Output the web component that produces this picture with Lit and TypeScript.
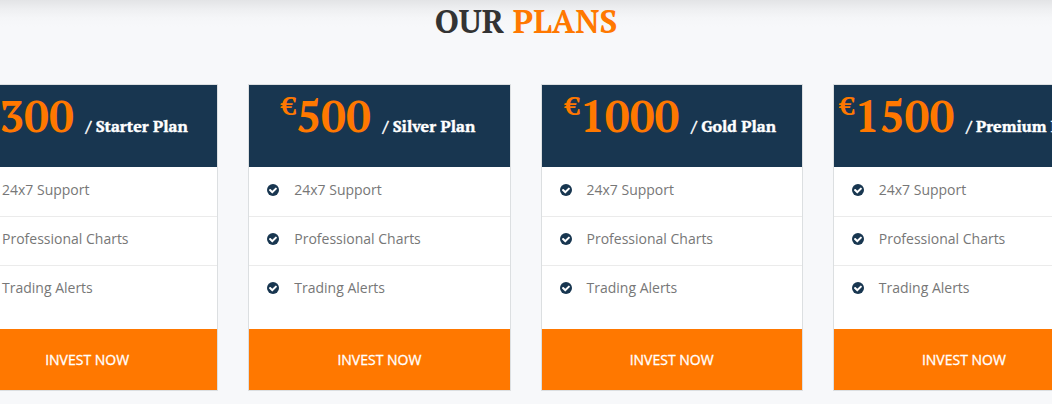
import { LitElement, html, css } from "lit";
import { customElement, property } from "lit/decorators.js";

@customElement("plan-card")
class PlanCard extends LitElement {
  @property() amount = "";
  @property() name = "";
  @property({ attribute: false }) features: string[] = [];

  static styles = css`
    :host {
      display: block;
      min-width: 0;
      border: 1px solid #dcdfe1;
      background: #fff;
    }
    .head {
      display: flex;
      justify-content: center;
      align-items: baseline;
      height: 82px;
      margin: 0;
      background: #183650;
      color: #ff7800;
      font: bold 44px/62px "PT Serif", "Liberation Serif", serif;
      white-space: nowrap;
    }
    .currency {
      align-self: flex-start;
      font-size: 26px;
      line-height: 40px;
    }
    .name {
      margin: 0 2px 0 12px;
      color: #fff;
      font-size: 16px;
      -webkit-text-stroke: 0.4px #fff;
    }
    .features {
      margin: 0;
      padding: 1px 0 15px;
      list-style: none;
    }
    .feature {
      display: flex;
      align-items: center;
      gap: 15px;
      padding: 11px 18px 15px;
      border-bottom: 1px solid #ebebeb;
      color: #777;
      font-size: 14px;
      line-height: 22px;
    }
    .feature:last-child {
      border-bottom: 0;
    }
    .check {
      flex: none;
      width: 12px;
      height: 12px;
    }
    .invest {
      display: block;
      background: #ff7800;
      color: #fff;
      font-size: 14px;
      line-height: 61px;
      text-align: center;
      text-decoration: none;
      -webkit-text-stroke: 0.3px #fff;
    }
  `;

  render() {
    return html`
      <h3 class="head">
        <span class="currency">€</span><span>${this.amount}</span>
        <span class="name">/ ${this.name}</span>
      </h3>
      <ul class="features">
        ${this.features.map(
          (feature) => html`
            <li class="feature">
              <svg class="check" viewBox="0 0 1536 1536" aria-hidden="true">
                <circle cx="768" cy="768" r="768" fill="#183650" />
                <path
                  fill="#fff"
                  d="M1284 606q0-28-18-46l-91-90q-19-19-45-19t-45 19L677 877 451 651q-19-19-45-19t-45 19l-91 90q-18 18-18 46 0 27 18 45l362 362q19 19 45 19 27 0 46-19l543-543q18-18 18-45z"
                />
              </svg>
              <span>${feature}</span>
            </li>
          `
        )}
      </ul>
      <a class="invest" href="#">INVEST NOW</a>
    `;
  }
}

@customElement("app-root")
class AppRoot extends LitElement {
  static styles = css`
    :host {
      display: block;
      min-height: 100vh;
      box-sizing: border-box;
      overflow: hidden;
      background: linear-gradient(#e3e4e6, #eeeff1 9px, #f5f6f8 18px, #f7f8fa 27px);
      font-family: "Open Sans", sans-serif;
    }
    .title {
      margin: 0;
      padding: 0 0 42px;
      color: #333;
      font: bold 32px/42px "PT Serif", "Liberation Serif", serif;
      text-align: center;
    }
    .accent {
      color: #ff7800;
    }
    .plans {
      display: grid;
      grid-template-columns: repeat(4, minmax(0, 1fr));
      gap: 30px;
      margin: 0 -43px 0 -44px;
      padding-bottom: 13px;
    }
  `;

  private features = ["24x7 Support", "Professional Charts", "Trading Alerts"];
  private plans = [
    { amount: "300", name: "Starter Plan" },
    { amount: "500", name: "Silver Plan" },
    { amount: "1000", name: "Gold Plan" },
    { amount: "1500", name: "Premium Plan" },
  ];

  render() {
    return html`
      <h2 class="title">OUR <span class="accent">PLANS</span></h2>
      <div class="plans">
        ${this.plans.map(
          (plan) => html`
            <plan-card
              .amount=${plan.amount}
              .name=${plan.name}
              .features=${this.features}
            ></plan-card>
          `
        )}
      </div>
    `;
  }
}
